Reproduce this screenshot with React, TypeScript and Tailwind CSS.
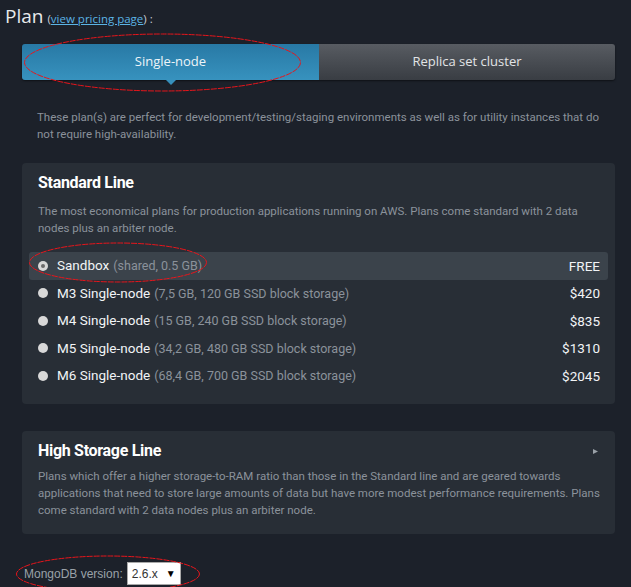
import React from "react";

const rows = [
  { name: "Sandbox", spec: "(shared, 0.5 GB)", price: "FREE", selected: true },
  { name: "M3 Single-node", spec: "(7,5 GB, 120 GB SSD block storage)", price: "$420" },
  { name: "M4 Single-node", spec: "(15 GB, 240 GB SSD block storage)", price: "$835" },
  { name: "M5 Single-node", spec: "(34,2 GB, 480 GB SSD block storage)", price: "$1310" },
  { name: "M6 Single-node", spec: "(68,4 GB, 700 GB SSD block storage)", price: "$2045" },
];

export default function App() {
  return (
    <div
      className="relative w-[631px] h-[587px] overflow-hidden bg-[#1c212a] text-white"
      style={{ fontFamily: "Roboto, 'Liberation Sans', sans-serif" }}
    >
      <div>
        <div className="pl-[5px] pt-[2px] h-[32px] flex items-baseline" style={{ fontFamily: "'Open Sans', sans-serif" }}>
          <span className="text-[19px] text-[#e8eaec]">Plan</span>
          <span className="text-[11.5px] text-[#c9cdd2] ml-[4px]">
            (<span className="text-[#5bb4e5] underline">view pricing page</span>) :
          </span>
        </div>

        <div className="ml-[22px] mr-[16px] mt-[12px] flex h-[36px] rounded-[3px] shadow-[0_1px_2px_rgba(0,0,0,0.5)]" style={{ fontFamily: "'Open Sans', sans-serif" }}>
          <div className="relative w-[297px] rounded-l-[3px] bg-gradient-to-b from-[#2879a5] to-[#3792be] flex items-center justify-center text-[13px] text-[#eef4f8]">
            Single-node
            <div className="absolute left-1/2 -translate-x-1/2 bottom-[-5px] w-0 h-0 border-l-[5px] border-r-[5px] border-t-[5px] border-l-transparent border-r-transparent border-t-[#3690bc]" />
          </div>
          <div className="flex-1 rounded-r-[3px] bg-gradient-to-b from-[#585c62] to-[#393d43] flex items-center justify-center text-[13px] text-[#e2e4e6]">
            Replica set cluster
          </div>
        </div>

        <p className="ml-[37px] mr-[24px] mt-[29px] text-[11.5px] leading-[17px] text-[#8b929b]">
          These plan(s) are perfect for development/testing/staging environments as well as for utility instances that do not require high-availability.
        </p>

        <div className="ml-[22px] mr-[16px] mt-[20px] h-[241px] rounded-[4px] bg-[#282e36] pt-[9px]">
          <h2 className="ml-[16px] text-[16px] font-bold tracking-[-0.3px] text-white leading-[22px]">Standard Line</h2>
          <p className="ml-[16px] mr-[16px] mt-[9px] text-[11.5px] leading-[17px] text-[#8b929b]">
            The most economical plans for production applications running on AWS. Plans come standard with 2 data nodes plus an arbiter node.
          </p>
          <div className="mt-[15px] mx-[7px] flex flex-col">
            {rows.map((r) => (
              <div
                key={r.name}
                className={`h-[27.5px] flex items-center pl-[9px] pr-[8px] rounded-[3px] ${r.selected ? "bg-[#3b434b]" : ""}`}
              >
                <span className="w-[10px] h-[10px] rounded-full bg-[#d8d8d8] flex items-center justify-center">
                  {r.selected && <span className="w-[4px] h-[4px] rounded-full bg-[#6b6b6b]" />}
                </span>
                <span className="ml-[9px] flex items-baseline">
                  <span className="text-[13.5px] text-[#f2f4f6]">{r.name}</span>
                  <span className="ml-[4px] text-[12.5px] text-[#8b929b]">{r.spec}</span>
                </span>
                <span className="ml-auto text-[13.5px] text-[#f2f4f6]">{r.price}</span>
              </div>
            ))}
          </div>
        </div>

        <div className="ml-[22px] mr-[16px] mt-[27px] h-[103px] rounded-[4px] bg-[#282e36] pt-[9px]">
          <div className="flex items-center">
            <h2 className="ml-[16px] text-[16px] font-bold tracking-[-0.3px] text-white leading-[22px]">High Storage Line</h2>
            <svg className="ml-auto mr-[16px]" width="7" height="7" viewBox="0 0 7 7">
              <path d="M1 1 L6 3.5 L1 6 Z" fill="#9aa1a8" />
            </svg>
          </div>
          <p className="ml-[16px] mr-[8px] mt-[6px] text-[11.5px] leading-[17px] text-[#8b929b]">
            Plans which offer a higher storage-to-RAM ratio than those in the Standard line and are geared towards applications that need to store large amounts of data but have more modest performance requirements. Plans come standard with 2 data nodes plus an arbiter node.
          </p>
        </div>

        <div className="mt-[28px] ml-[24px] flex items-center">
          <span className="text-[12px] text-[#9aa1a8]" style={{ fontFamily: "'Liberation Sans', sans-serif" }}>MongoDB version:</span>
          <div className="ml-[4px] w-[54px] h-[23px] bg-white border border-[#a9a9a9] flex items-center pl-[4px] pr-[4px]" style={{ fontFamily: "'Liberation Sans', sans-serif" }}>
            <span className="text-[12px] text-[#333]">2.6.x</span>
            <span className="ml-auto text-[10px] text-black">▼</span>
          </div>
        </div>
      </div>

      <svg className="absolute inset-0 pointer-events-none" width="631" height="587" viewBox="0 0 631 587">
        <g fill="none" stroke="#e8151b" strokeWidth="1" strokeDasharray="6 1">
          <ellipse cx="162.5" cy="62.5" rx="138" ry="28.5" />
          <ellipse cx="118" cy="262.5" rx="88.5" ry="19.5" />
          <ellipse cx="108" cy="574" rx="91.5" ry="18" />
        </g>
      </svg>
    </div>
  );
}
